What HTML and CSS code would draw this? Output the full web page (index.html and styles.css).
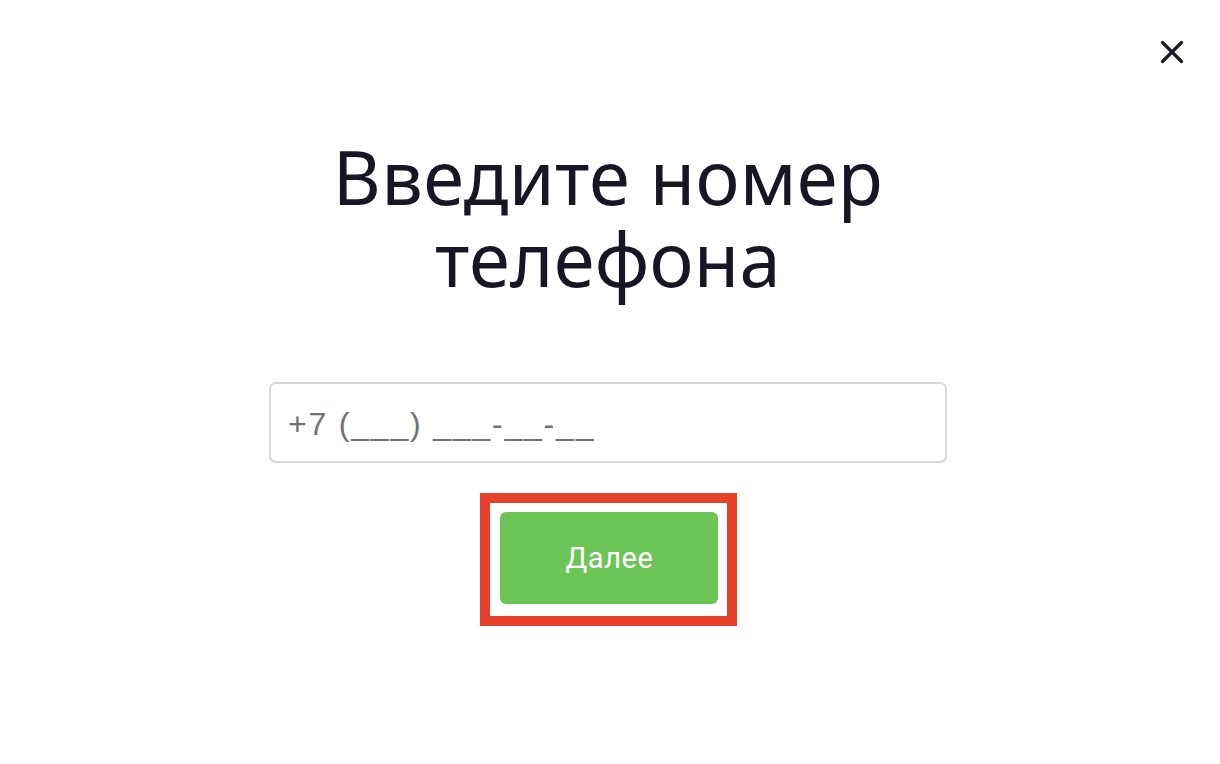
FILE: index.html
```html
<!DOCTYPE html>
<html lang="ru">
<head>
<meta charset="utf-8">
<title>Введите номер телефона</title>
<link rel="stylesheet" href="styles.css">
</head>
<body>
<div class="modal">
  <button class="close" aria-label="Закрыть">
    <svg width="24" height="24" viewBox="0 0 24 24"><path d="M2.5 2.5 L21.5 21.5 M21.5 2.5 L2.5 21.5" stroke="#1a1a26" stroke-width="3.2" stroke-linecap="round" fill="none"/></svg>
  </button>
  <div class="content">
    <h1 class="title"><span class="line">Введите номер</span><span class="line">телефона</span></h1>
    <input class="phone" type="tel" placeholder="+7 (___) ___-__-__">
    <div class="highlight">
      <button class="next">Далее</button>
    </div>
  </div>
</div>
</body>
</html>
```

FILE: styles.css
```css
html, body {
  margin: 0;
  padding: 0;
  background: #ffffff;
}
.modal {
  position: relative;
  width: 1220px;
  height: 764px;
  box-sizing: border-box;
}
.close {
  position: absolute;
  top: 40px;
  left: 1160px;
  width: 24px;
  height: 24px;
  padding: 0;
  border: none;
  background: none;
  cursor: pointer;
}
.close svg { display: block; }
.content {
  display: flex;
  flex-direction: column;
  align-items: center;
  padding-top: 136px;
  padding-right: 4px;
}
.title {
  margin: 0;
  display: flex;
  flex-direction: column;
  align-items: center;
  font-family: "Noto Sans", "Open Sans", sans-serif;
  font-weight: 400;
  font-size: 74px;
  line-height: 82px;
  color: #171723;
  text-align: center;
}
.title .line {
  display: block;
  height: 82px;
  letter-spacing: 0.3px;
}
.phone {
  margin-top: 82px;
  width: 678px;
  height: 81px;
  box-sizing: border-box;
  border: 2px solid #d5d7db;
  border-radius: 7px;
  padding: 4px 16px 0 17px;
  font-family: "Liberation Sans", Arial, sans-serif;
  font-size: 32px;
  letter-spacing: 1.8px;
  color: #333;
  outline: none;
}
.phone::placeholder {
  color: #707179;
  opacity: 1;
}
.highlight {
  margin-top: 30px;
  border: 10px solid #e8412b;
  padding: 9px 9px 12px 10px;
}
.next {
  display: block;
  width: 218px;
  height: 92px;
  border: none;
  border-radius: 6px;
  background: #6cc557;
  color: #ffffff;
  font-family: Roboto, "Liberation Sans", sans-serif;
  font-weight: 400;
  font-size: 29px;
  letter-spacing: 0.6px;
  padding: 0 0 0 2px;
  cursor: pointer;
}
```
